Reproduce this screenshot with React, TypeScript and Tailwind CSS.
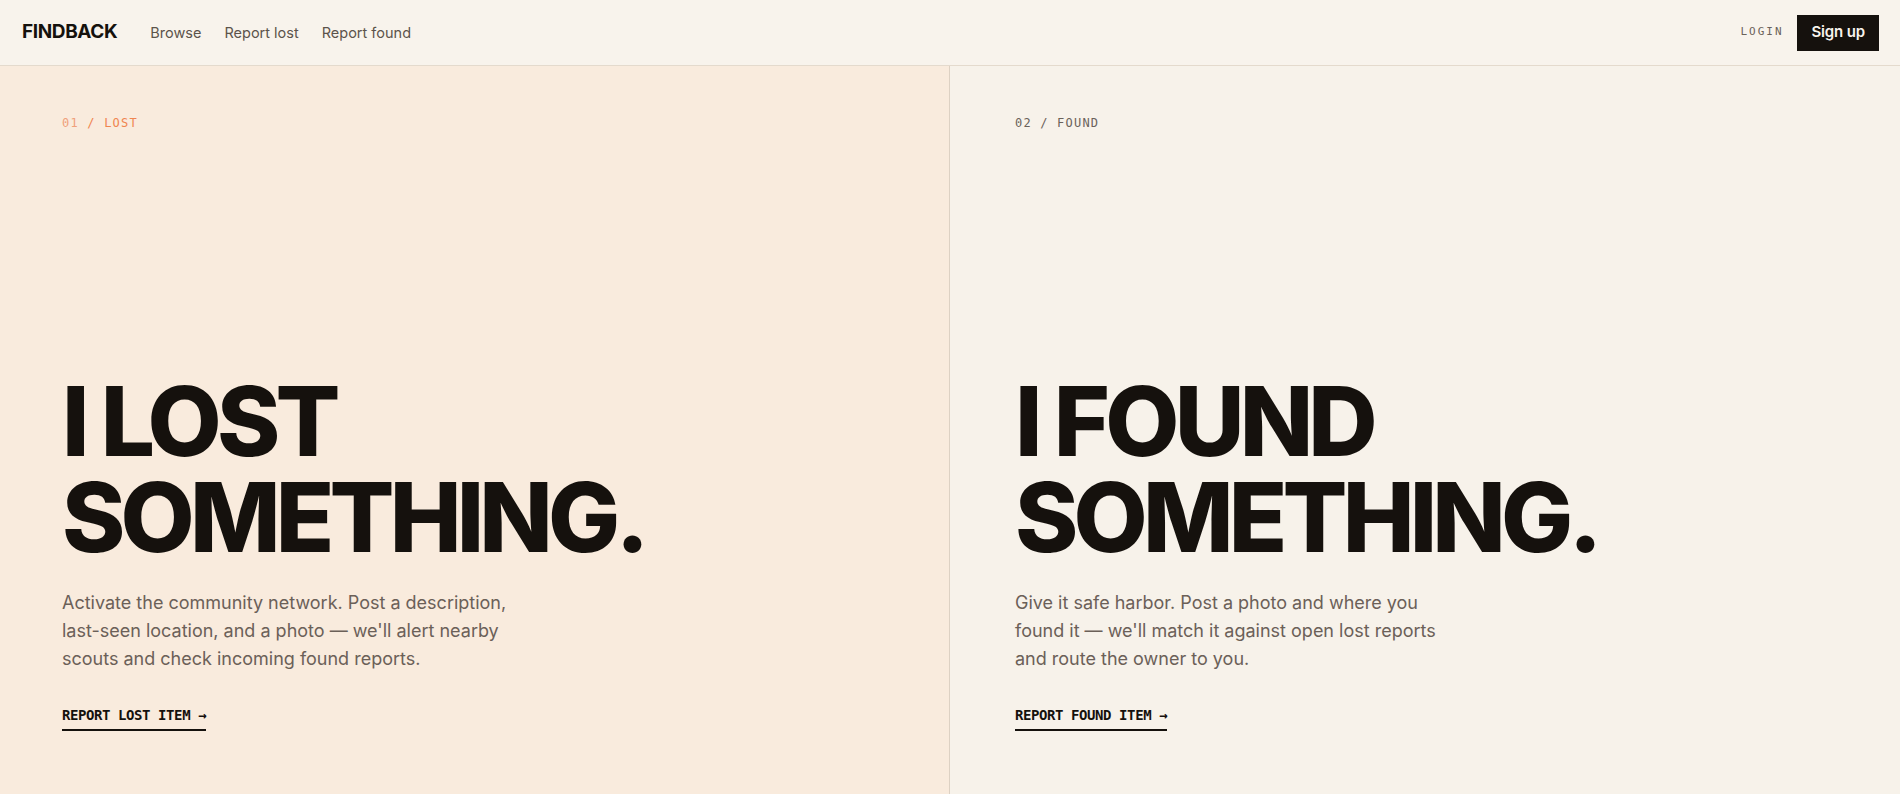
export default function App() {
  const sans = { fontFamily: 'Inter, "Noto Sans", sans-serif' };
  return (
    <div className="min-h-screen flex flex-col bg-[#f8f3ec] text-[#15110d]" style={sans}>
      {/* Header */}
      <header className="h-[66px] shrink-0 flex items-center justify-between pl-[22px] pr-[21px] border-b border-[#e4dacd] bg-[#f8f3ec]">
        <div className="flex items-center">
          <span className="text-[19px] font-bold tracking-[-0.02em] mr-[33px]">FINDBACK</span>
          <nav className="flex items-center gap-[23px] text-[14.5px] text-[#5c534b]">
            <a>Browse</a>
            <a>Report lost</a>
            <a>Report found</a>
          </nav>
        </div>
        <div className="flex items-center gap-[14px]">
          <span className="font-['DejaVu_Sans_Mono',monospace] text-[11px] tracking-[0.18em] text-[#6b625a]">LOGIN</span>
          <button className="h-[36px] px-[14px] bg-[#15110d] text-[#f8f3ec] text-[15px] font-semibold tracking-[-0.01em]">
            Sign up
          </button>
        </div>
      </header>

      {/* Panels */}
      <main className="flex-1 grid grid-cols-2">
        <section className="bg-[#f9ebdd] border-r border-[#ddd1c3] flex flex-col justify-between pl-[62px] pr-[62px] pt-[49px] pb-[63px]">
          <div className="font-['DejaVu_Sans_Mono',monospace] text-[12px] leading-[16px] tracking-[0.1em] text-[#f08550]">
            <span className="text-[#f0a07a]">01</span> / LOST
          </div>
          <div>
            <h1 className="text-[96px] leading-none font-extrabold tracking-[-0.05em]">
              I LOST
              <br />
              SOMETHING.
            </h1>
            <p className="mt-[24px] max-w-md text-[18px] leading-[28px] text-[#6b6058]">
              Activate the community network. Post a description, last-seen location, and a photo — we'll alert nearby scouts and check incoming found reports.
            </p>
            <a className="mt-[34px] inline-block font-['DejaVu_Sans_Mono',monospace] font-bold text-[14px] leading-[16px] tracking-[-0.03em] pb-[6px] border-b-2 border-[#15110d]">
              REPORT LOST ITEM →
            </a>
          </div>
        </section>

        <section className="bg-[#f7f2ea] flex flex-col justify-between pl-[65px] pr-[62px] pt-[49px] pb-[63px]">
          <div className="font-['DejaVu_Sans_Mono',monospace] text-[12px] leading-[16px] tracking-[0.1em] text-[#6b625a]">
            02 / FOUND
          </div>
          <div>
            <h1 className="text-[96px] leading-none font-extrabold tracking-[-0.05em]">
              I FOUND
              <br />
              SOMETHING.
            </h1>
            <p className="mt-[24px] max-w-md text-[18px] leading-[28px] text-[#6b6058]">
              Give it safe harbor. Post a photo and where you found it — we'll match it against open lost reports and route the owner to you.
            </p>
            <a className="mt-[34px] inline-block font-['DejaVu_Sans_Mono',monospace] font-bold text-[14px] leading-[16px] tracking-[-0.03em] pb-[6px] border-b-2 border-[#15110d]">
              REPORT FOUND ITEM →
            </a>
          </div>
        </section>
      </main>
    </div>
  );
}
